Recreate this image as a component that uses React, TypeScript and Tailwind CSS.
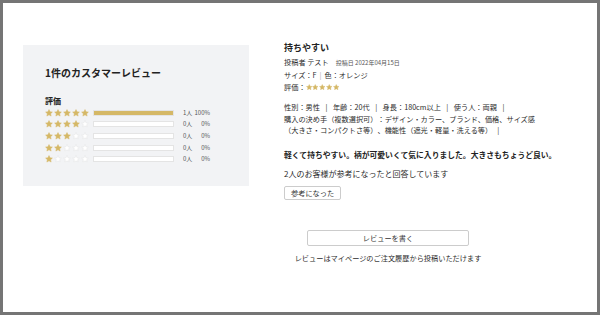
import { Fragment } from "react";

const GOLD = "#d5b866";

// 星1つ（塗り／空）
function Star({ filled, size }: { filled: boolean; size: number }) {
  return (
    <svg width={size} height={size} viewBox="0 0 24 24" className="shrink-0">
      <path
        d="M12 1.8l3.1 6.6 7.1.8-5.3 4.9 1.5 7.1L12 17.6l-6.4 3.6 1.5-7.1-5.3-4.9 7.1-.8z"
        fill={filled ? GOLD : "#ffffff"}
        stroke={filled ? GOLD : "#e2e2e2"}
        strokeWidth={1.4}
        strokeLinejoin="round"
      />
    </svg>
  );
}

function Stars({ count, size, gap }: { count: number; size: number; gap: string }) {
  return (
    <div className={`flex items-center ${gap}`}>
      {[0, 1, 2, 3, 4].map((i) => (
        <Star key={i} filled={i < count} size={size} />
      ))}
    </div>
  );
}

const DIST = [
  { stars: 5, people: 1, pct: 100 },
  { stars: 4, people: 0, pct: 0 },
  { stars: 3, people: 0, pct: 0 },
  { stars: 2, people: 0, pct: 0 },
  { stars: 1, people: 0, pct: 0 },
];

const ATTRS = ["性別：男性", "年齢：20代", "身長：180cm以上", "使う人：両親"];

export default function App() {
  return (
    <div
      className="flex h-[315px] w-[600px] items-start gap-[35px] border-[3px] border-[#757575] bg-white pl-[20px] pt-[38px] text-[#2b2b2b] [text-spacing-trim:space-all]"
      style={{ fontFamily: '"Noto Sans CJK JP", "Noto Sans", sans-serif' }}
    >
      {/* 左：カスタマーレビュー集計 */}
      <div className="mt-[4px] h-[141px] w-[226px] shrink-0 bg-[#f2f3f5] pl-[22px] pt-[21px]">
        <h2 className="text-[10px] leading-[14px] font-bold text-[#222]">1件のカスタマーレビュー</h2>
        <h3 className="mt-[15px] text-[8px] leading-[12px] font-bold text-[#222]">評価</h3>
        <div>
          {DIST.map((d) => (
            <div key={d.stars} className="flex h-[11.6px] items-center">
              <div className="w-[48px]">
                <Stars count={d.stars} size={8} gap="gap-[1px]" />
              </div>
              <div className="h-[6px] w-[81px] border border-[#e4e4e4] bg-white">
                <div className="h-full bg-[#d5b866]" style={{ width: `${d.pct}%` }} />
              </div>
              <span className="ml-[9px] w-[10px] text-[6px] leading-none text-[#555]">{d.people}人</span>
              <span className="w-[17px] text-right text-[6px] leading-none text-[#555]">{d.pct}%</span>
            </div>
          ))}
        </div>
      </div>

      {/* 右：レビュー本文 */}
      <div className="w-[300px] whitespace-nowrap text-[7.2px]">
        <h3 className="text-[9px] leading-[14px] font-bold text-[#222]">持ちやすい</h3>
        <div className="mt-[1px] leading-[12px]">
          <p className="flex items-baseline">
            <span>投稿者 テスト</span>
            <span className="ml-[7px] text-[6px] text-[#555]">投稿日 2022年04月15日</span>
          </p>
          <p>
            サイズ：F<span className="mx-[3px] text-[#aaa]">|</span>色：オレンジ
          </p>
          <p className="flex items-center">
            評価：
            <Stars count={5} size={6.5} gap="gap-[0.3px]" />
          </p>
        </div>

        <div className="mt-[9px] leading-[11.7px]">
          <p>
            {ATTRS.map((t) => (
              <Fragment key={t}>
                {t}
                <span className="mx-[5.5px]">|</span>
              </Fragment>
            ))}
          </p>
          <p>購入の決め手（複数選択可）：デザイン・カラー、ブランド、価格、サイズ感</p>
          <p>
            （大きさ・コンパクトさ等）、機能性（遮光・軽量・洗える等）<span className="mx-[5px]">|</span>
          </p>
        </div>

        <p className="mt-[12px] text-[7.8px] leading-[12px] font-bold text-[#222]">
          軽くて持ちやすい。柄が可愛いくて気に入りました。大きさもちょうど良い。
        </p>

        <p className="mt-[7px] text-[8px] leading-[12px]">2人のお客様が参考になったと回答しています</p>
        <button className="mt-[6px] h-[14px] rounded-[2px] border border-[#ccc] bg-white px-[6px] text-[7.2px] leading-none text-[#333]">
          参考になった
        </button>

        <div className="mt-[30px] flex w-[208px] flex-col items-center">
          <button className="h-[16px] w-[162px] rounded-[2px] border border-[#ccc] bg-white text-[7.2px] leading-none text-[#333]">
            レビューを書く
          </button>
          <p className="mt-[6px] leading-[12px]">レビューはマイページのご注文履歴から投稿いただけます</p>
        </div>
      </div>
    </div>
  );
}
